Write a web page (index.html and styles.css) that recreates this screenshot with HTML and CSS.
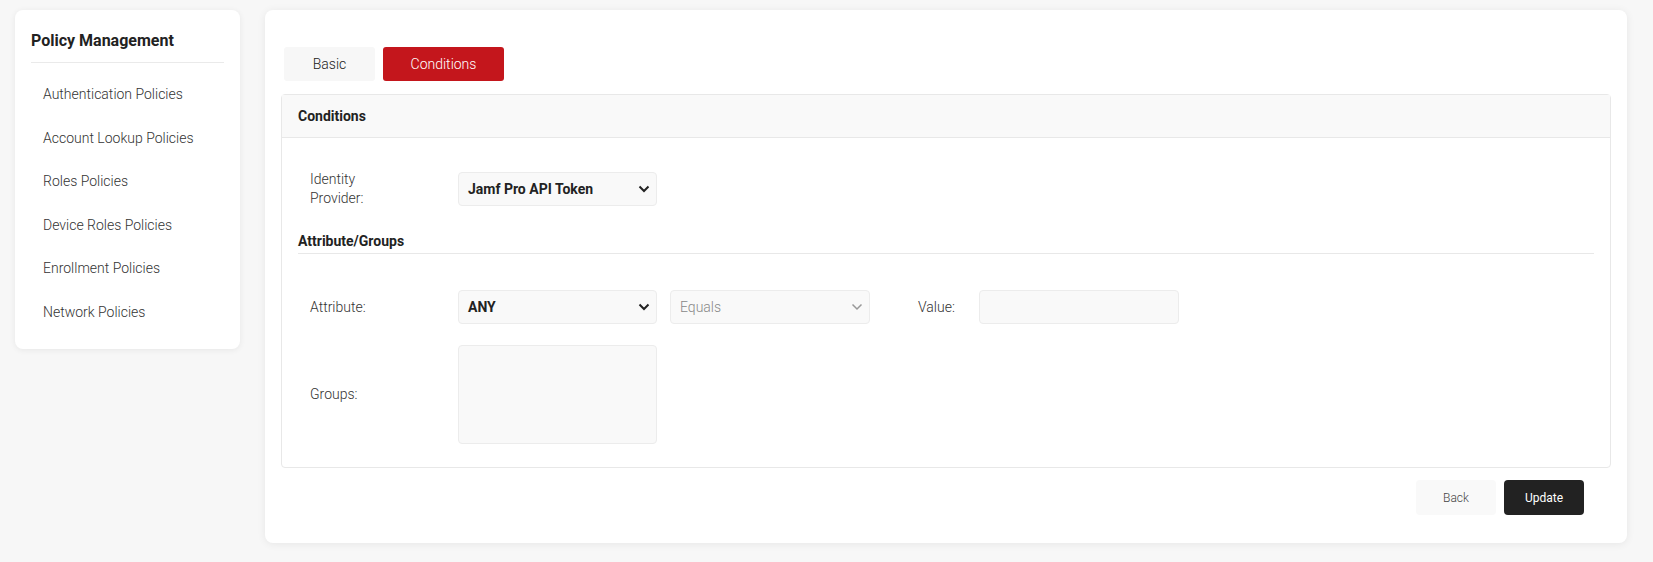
FILE: index.html
```html
<!DOCTYPE html>
<html lang="en">

<head>
    <meta charset="UTF-8">
    <meta name="viewport" content="width=device-width, initial-scale=1.0">
    <title>Policy Management - Conditions</title>
    <link rel="stylesheet" href="styles.css">
</head>

<body>
    <div class="layout">
        <aside class="sidebar">
            <h2 class="sidebar-title">Policy Management</h2>
            <ul class="side-nav">
                <li>Authentication Policies</li>
                <li>Account Lookup Policies</li>
                <li>Roles Policies</li>
                <li>Device Roles Policies</li>
                <li>Enrollment Policies</li>
                <li>Network Policies</li>
            </ul>
        </aside>

        <main class="main-card">
            <div class="tabs">
                <button class="tab">Basic</button>
                <button class="tab active">Conditions</button>
            </div>

            <section class="panel">
                <div class="panel-header">Conditions</div>
                <div class="panel-body">
                    <div class="form-row">
                        <label class="field-label">Identity<br>Provider:</label>
                        <div class="select bold">
                            <span>Jamf Pro API Token</span>
                            <svg class="chevron" width="12" height="8" viewBox="0 0 12 8"><path d="M1.5 1.5l4.5 4.5 4.5-4.5" fill="none" stroke="#222" stroke-width="2"/></svg>
                        </div>
                    </div>

                    <h3 class="sub-title">Attribute/Groups</h3>

                    <div class="form-row attr-row">
                        <label class="field-label">Attribute:</label>
                        <div class="select bold">
                            <span>ANY</span>
                            <svg class="chevron" width="12" height="8" viewBox="0 0 12 8"><path d="M1.5 1.5l4.5 4.5 4.5-4.5" fill="none" stroke="#222" stroke-width="2"/></svg>
                        </div>
                        <div class="select muted wide">
                            <span>Equals</span>
                            <svg class="chevron" width="12" height="8" viewBox="0 0 12 8"><path d="M1.5 1.5l4.5 4.5 4.5-4.5" fill="none" stroke="#999" stroke-width="1.5"/></svg>
                        </div>
                        <label class="field-label value-label">Value:</label>
                        <div class="input wide"></div>
                    </div>

                    <div class="form-row groups-row">
                        <label class="field-label">Groups:</label>
                        <div class="textarea"></div>
                    </div>
                </div>
            </section>

            <div class="actions">
                <button class="btn btn-light">Back</button>
                <button class="btn btn-dark">Update</button>
            </div>
        </main>
    </div>
</body>

</html>
```

FILE: styles.css
```css
:root {
    --bg-color: #f7f7f7;
    --card-bg: #fff;
    --text-color: #222;
    --field-bg: #f9f9f9;
    --field-border: #ececec;
    --brand-red: #c4161c;
    --shadow-color: rgba(0, 0, 0, 0.07);
}

body {
    font-family: Roboto, "Liberation Sans", Arial, sans-serif;
    margin: 0;
    background-color: var(--bg-color);
    color: var(--text-color);
}

.layout {
    display: flex;
    align-items: flex-start;
    gap: 25px;
    padding: 10px 26px 18px 15px;
}

.sidebar {
    width: 225px;
    box-sizing: border-box;
    background-color: var(--card-bg);
    border-radius: 8px;
    box-shadow: 0 1px 6px var(--shadow-color);
    padding: 21px 16px 14px 16px;
}

.sidebar-title {
    font-size: 16px;
    font-weight: 700;
    margin: 0;
    padding: 0 0 12px 0;
    border-bottom: 1px solid #eaeaea;
}

.side-nav {
    list-style: none;
    margin: 0;
    padding: 0;
}

.side-nav li {
    font-size: 14px;
    font-weight: 300;
    color: #333;
    padding: 0 12px;
    height: 43.6px;
    line-height: 43.6px;
}

.side-nav li:first-child {
    margin-top: 10px;
}

.main-card {
    flex: 1;
    background-color: var(--card-bg);
    border-radius: 8px;
    box-shadow: 0 1px 8px var(--shadow-color);
    padding: 37px 16px 28px 16px;
}

.tabs {
    display: flex;
    gap: 8px;
    padding-left: 3px;
    margin-bottom: 13px;
}

.tab {
    font-family: inherit;
    font-size: 14px;
    font-weight: 300;
    border: none;
    border-radius: 3px;
    height: 34px;
    width: 91px;
    background-color: #f7f7f7;
    color: #222;
    cursor: pointer;
}

.tab.active {
    width: 121px;
    background-color: var(--brand-red);
    color: #fff;
}

.panel {
    border: 1px solid #e8e8e8;
    border-radius: 4px;
}

.panel-header {
    background-color: #f9f9f9;
    border-bottom: 1px solid #e8e8e8;
    font-size: 14px;
    font-weight: 700;
    height: 42px;
    line-height: 42px;
    padding-left: 16px;
}

.panel-body {
    padding: 32px 16px 23px 16px;
}

.form-row {
    display: flex;
    align-items: center;
    padding-left: 12px;
}

.field-label {
    width: 148px;
    flex-shrink: 0;
    font-size: 14px;
    font-weight: 300;
    color: #333;
    line-height: 19px;
}

.select,
.input {
    box-sizing: border-box;
    width: 199px;
    height: 34px;
    background-color: var(--field-bg);
    border: 1px solid var(--field-border);
    border-radius: 4px;
    display: flex;
    align-items: center;
    justify-content: space-between;
    padding: 0 6px 0 9px;
    font-size: 14px;
}

.select.bold {
    font-weight: 700;
    color: #222;
}

.select.wide,
.input.wide {
    width: 200px;
}

.select.muted {
    color: #888;
    font-weight: 300;
}

.chevron {
    display: block;
}

.sub-title {
    font-size: 14px;
    font-weight: 700;
    margin: 25px 0 0 0;
    padding-bottom: 4px;
    border-bottom: 1px solid #e8e8e8;
}

.attr-row {
    margin-top: 36px;
}

.attr-row .select.muted {
    margin-left: 13px;
}

.value-label {
    width: 61px;
    margin-left: 48px;
}

.groups-row {
    margin-top: 21px;
}

.textarea {
    box-sizing: border-box;
    width: 199px;
    height: 99px;
    background-color: var(--field-bg);
    border: 1px solid var(--field-border);
    border-radius: 4px;
}

.actions {
    display: flex;
    justify-content: flex-end;
    gap: 8px;
    margin-top: 12px;
    padding-right: 27px;
}

.btn {
    font-family: inherit;
    font-size: 12px;
    width: 80px;
    height: 35px;
    border: none;
    border-radius: 4px;
    cursor: pointer;
}

.btn-light {
    background-color: #f9f9f9;
    color: #444;
    font-weight: 300;
}

.btn-dark {
    background-color: #222;
    color: #fff;
}
```
